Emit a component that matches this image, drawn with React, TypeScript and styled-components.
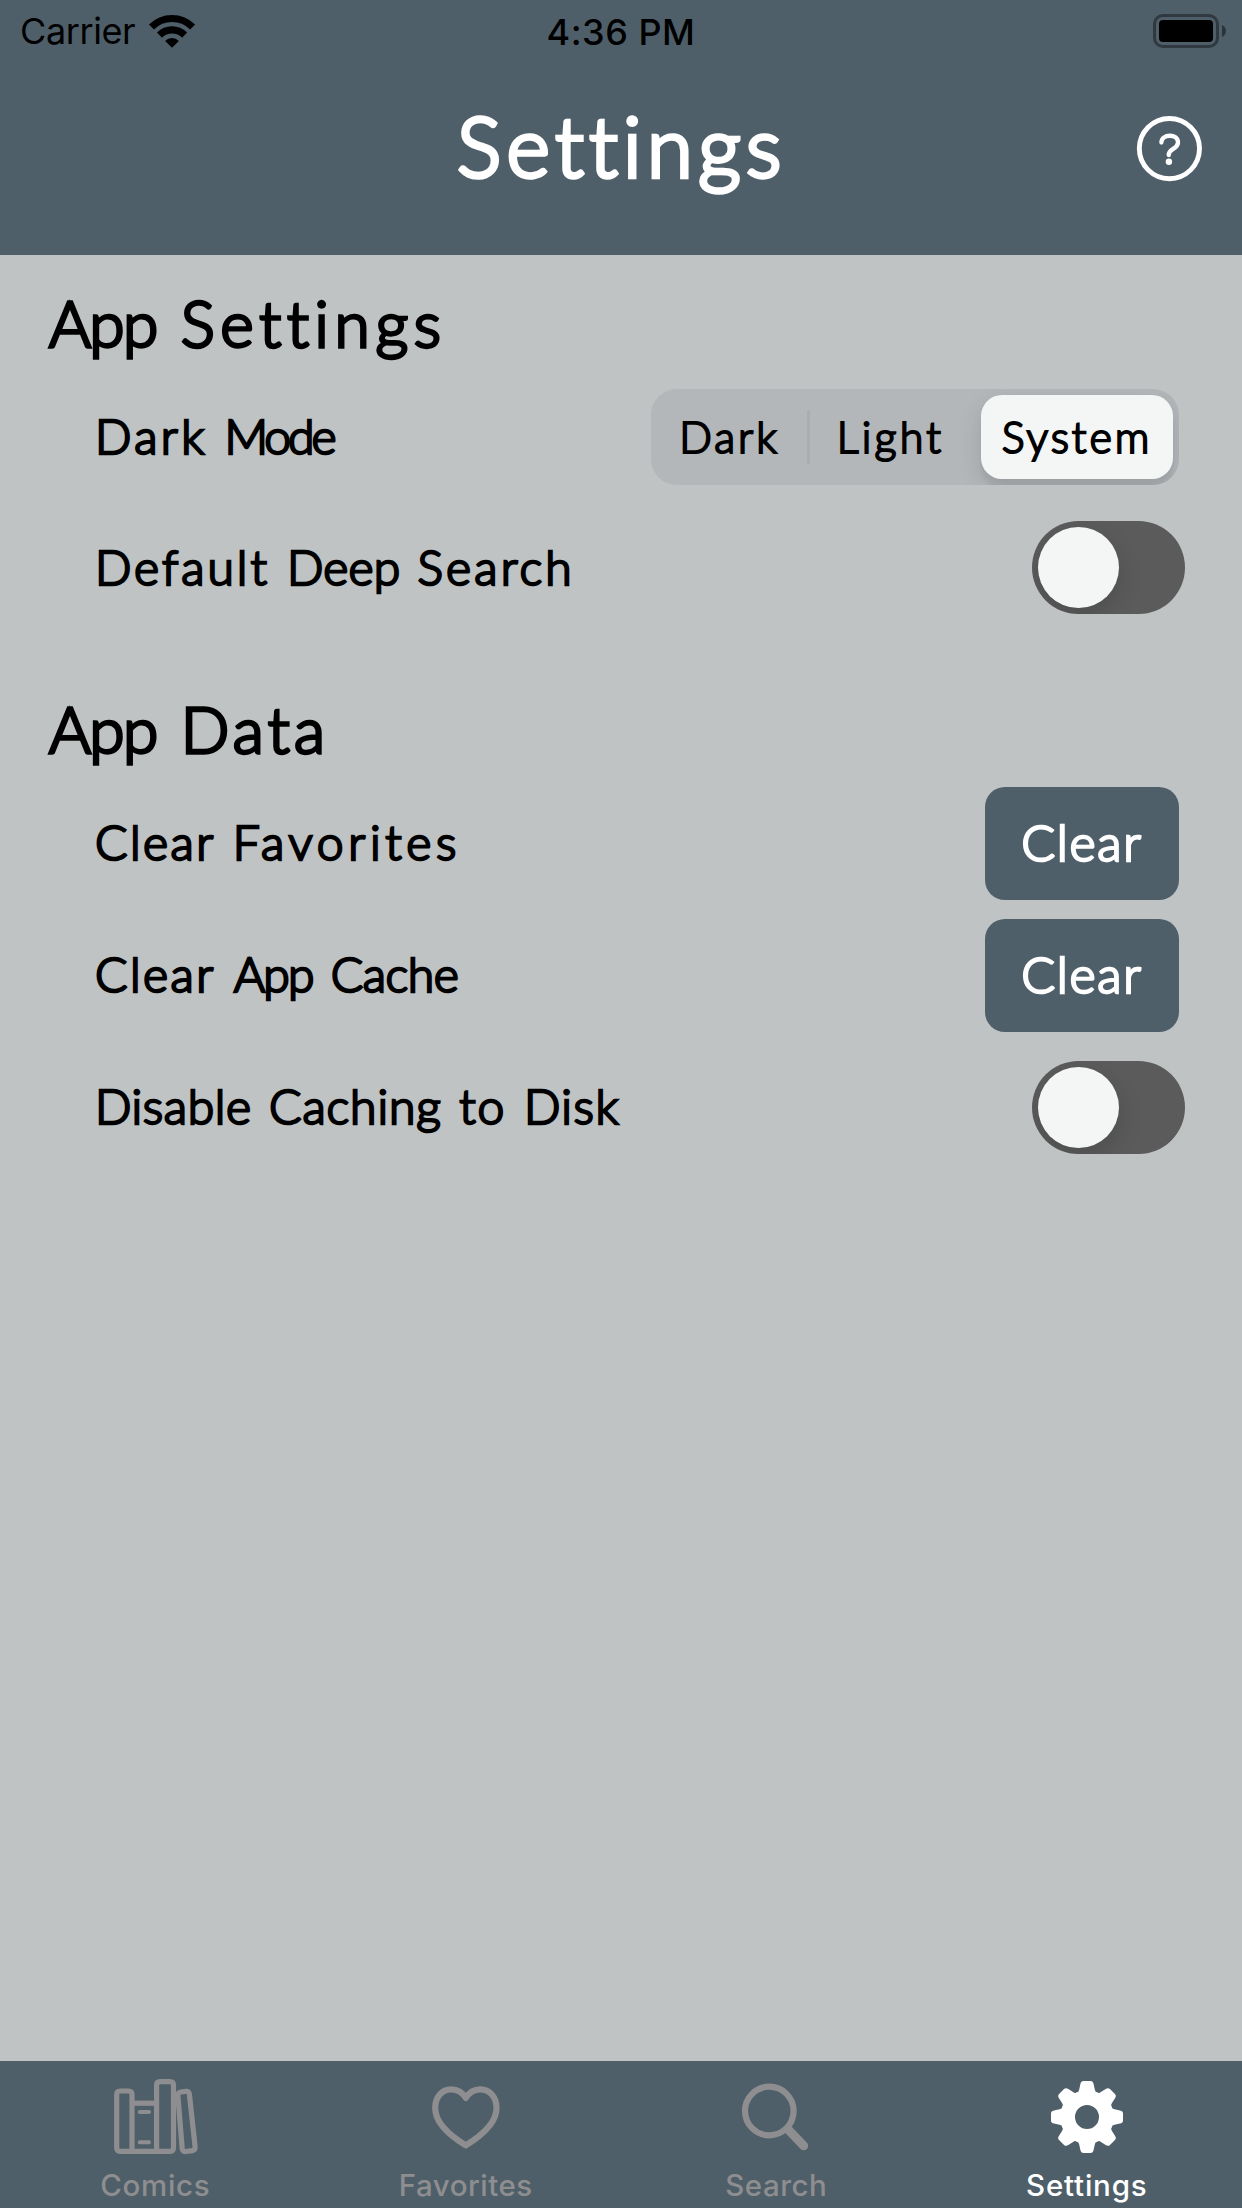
import React, { useState } from "react";
import styled, { createGlobalStyle } from "styled-components";

const slate = "#4f5f69";
const paper = "#bfc3c4";
const muted = "#8e8e90";

const GlobalStyle = createGlobalStyle`
  * { box-sizing: border-box; }
  body { margin: 0; background: ${paper}; }
  button { border: 0; padding: 0; background: none; color: inherit; font: inherit; }
`;

const Screen = styled.div`
  display: flex;
  flex-direction: column;
  width: 1242px;
  height: 2208px;
  background: ${paper};
  color: #000;
  font-family: Inter, "Liberation Sans", sans-serif;
`;

const Header = styled.header`
  height: 255px;
  background: ${slate};
`;

const StatusBar = styled.div`
  display: grid;
  grid-template-columns: 1fr auto 1fr;
  align-items: center;
  height: 60px;
  padding: 0 15px 0 20px;
`;

const Carrier = styled.div`
  display: flex;
  align-items: center;
  gap: 13px;
  font-size: 36px;
  line-height: 62px;
  letter-spacing: -0.4px;
`;

const Clock = styled.div`
  font-size: 36px;
  font-weight: 500;
  line-height: 60px;
  letter-spacing: 0.5px;
  padding: 2px 5px 0 0;
`;

const BatteryIcon = styled.svg`
  justify-self: end;
`;

const TitleBar = styled.div`
  display: grid;
  grid-template-columns: 1fr auto 1fr;
  align-items: center;
  height: 177px;
  padding: 0 40px;
`;

interface InkProps {
  $size: number;
  $track?: number;
  $stroke?: number;
}

const Ink = styled.span<InkProps>`
  display: block;
  font-family: Lato, "Open Sans", sans-serif;
  font-weight: 300;
  font-size: ${(p) => p.$size}px;
  line-height: 1.2;
  letter-spacing: ${(p) => p.$track ?? 0}px;
  white-space: nowrap;
  font-variant-ligatures: none;
  -webkit-text-stroke: ${(p) => p.$stroke ?? 2.5}px currentColor;
  stroke-linejoin: round;
`;

const Word = styled.span<{ $track: number }>`
  letter-spacing: ${(p) => p.$track}px;
`;

const Title = styled(Ink).attrs({ as: "h1" })`
  grid-column: 2;
  margin: 0;
  padding: 0 0 5px 2px;
  color: #fff;
`;

const HelpButton = styled.button`
  justify-self: end;
  display: flex;
`;

const Content = styled.main`
  flex: 1;
  padding: 0 57px 0 49px;
`;

const Section = styled.section<{ $top: number }>`
  padding-top: ${(p) => p.$top}px;
`;

const Heading = styled(Ink).attrs({ as: "h2" })`
  margin: 0;
  height: 86px;
`;

const Row = styled.div<{ $height?: number }>`
  display: flex;
  align-items: center;
  justify-content: space-between;
  height: ${(p) => p.$height ?? 132}px;
  padding-left: 46px;
`;

const Label = styled(Ink)`
  padding-bottom: 2px;
`;

const Segmented = styled.div`
  display: flex;
  align-items: center;
  width: 528px;
  height: 96px;
  margin-right: 6px;
  padding: 6px;
  border-radius: 26px;
  background: #b3b7ba;
  overflow: hidden;
`;

const Segment = styled.button<{ $width: number; $inset: number; $on: boolean }>`
  display: flex;
  align-items: center;
  justify-content: center;
  width: ${(p) => p.$width}px;
  height: 84px;
  padding-right: ${(p) => p.$inset}px;
  border-radius: 21px;
  background: ${(p) => (p.$on ? "#f4f6f6" : "transparent")};
  box-shadow: ${(p) => (p.$on ? "0 9px 24px rgba(0,0,0,.12), 0 9px 3px rgba(0,0,0,.04)" : "none")};
`;

const Divider = styled.span<{ $shown: boolean }>`
  width: 3px;
  height: 54px;
  border-radius: 2px;
  background: ${(p) => (p.$shown ? "#a9adb0" : "transparent")};
`;

const Track = styled.button<{ $on: boolean }>`
  display: flex;
  justify-content: ${(p) => (p.$on ? "flex-end" : "flex-start")};
  width: 153px;
  height: 93px;
  padding: 6px;
  border-radius: 47px;
  background: ${(p) => (p.$on ? slate : "#5b5b5b")};
  overflow: hidden;
`;

const Knob = styled.span`
  width: 81px;
  height: 81px;
  border-radius: 50%;
  background: #f4f6f6;
  box-shadow: 0 9px 24px rgba(0, 0, 0, 0.15);
`;

const ClearButton = styled.button`
  display: flex;
  align-items: center;
  justify-content: center;
  width: 194px;
  height: 113px;
  margin-right: 6px;
  border-radius: 20px;
  background: ${slate};
  color: #fff;
`;

const TabBar = styled.nav`
  display: grid;
  grid-template-columns: repeat(4, 1fr);
  height: 147px;
  background: ${slate};
`;

const Tab = styled.button<{ $active?: boolean }>`
  display: flex;
  flex-direction: column;
  align-items: center;
  padding-top: 14px;
  color: ${(p) => (p.$active ? "#fff" : muted)};
`;

const TabLabel = styled.span<{ $track: number }>`
  margin-top: 8px;
  font-size: 29.5px;
  font-weight: 500;
  line-height: 36px;
  letter-spacing: ${(p) => p.$track}px;
`;

const Wifi = () => (
  <svg width="48" height="35" viewBox="148 12 48 35" fill="none" stroke="#000">
    <path d="M151.5 25 A29.1 29.1 0 0 1 192.6 25" strokeWidth="7.2" />
    <path d="M159.5 33.1 A17.8 17.8 0 0 1 184.6 33.1" strokeWidth="7.2" />
    <path d="M172 45.7 L165.1 38.9 A9.8 9.8 0 0 1 178.9 38.9 Z" fill="#000" stroke="none" />
  </svg>
);

const Battery = () => (
  <BatteryIcon width="74" height="34" viewBox="0 0 74 34">
    <rect x="1.5" y="1.5" width="63" height="31" rx="8.5" fill="none" stroke="#000" strokeOpacity=".4" strokeWidth="3" />
    <rect x="6" y="6" width="54" height="22" rx="4" />
    <path d="M69 11 C74.3 13 74.3 21 69 23 Z" opacity=".45" />
  </BatteryIcon>
);

const Help = () => (
  <svg width="66" height="66" viewBox="0 0 66 66" fill="none" stroke="#fff" strokeLinecap="round">
    <circle cx="33.4" cy="32.6" r="30.1" strokeWidth="4.9" />
    <path d="M25.4 26.5 C25.4 18 42.2 17 42 26.6 C41.8 33.4 32.5 32.4 32.7 39" strokeWidth="4.3" />
    <circle cx="32.9" cy="45.7" r="3.2" fill="#fff" stroke="none" />
  </svg>
);

const Books = () => (
  <svg width="90" height="84" viewBox="0 0 90 84" fill="none" stroke="currentColor" strokeWidth="5.2" strokeLinejoin="round">
    <path d="M22 76.3 V19.5 Q22 16 18.5 16 H10.2 Q6.7 16 6.7 19.5 V72.8 Q6.7 76.3 10.2 76.3 H60 Q63.5 76.3 63.5 72.8 V10.2 Q63.5 6.7 60 6.7 H50.1 Q46.6 6.7 46.6 10.2 V76.3" />
    <path d="M22 28.2 H46.6" />
    <path d="M29.8 37 H39 M29.8 67.3 H39" strokeWidth="4" strokeLinecap="round" />
    <path d="M70.8 17 L76 16.3 Q79.1 16 79.4 19.3 L85.1 71.8 Q85.4 75 82.3 75.6 L76 76.5 Q72.6 76.8 72.2 73.5 L67.9 21 Q67.6 17.5 70.8 17 Z" />
  </svg>
);

const Heart = () => (
  <svg width="76" height="84" viewBox="0 -5 76 84" fill="none" stroke="currentColor" strokeWidth="6.2" strokeLinejoin="round">
    <path d="M37.8 65.4 C20 54.5 7.2 42 7.2 28.3 C7.2 17 14 9.3 23.3 9.3 C29.5 9.3 34.5 12.5 37.8 18 C41.1 12.5 46 9.3 52.2 9.3 C61.6 9.3 68.5 17 68.5 28.3 C68.5 42 55.5 54.5 37.8 65.4 Z" />
  </svg>
);

const Magnifier = () => (
  <svg width="76" height="84" viewBox="0 -5 76 84" fill="none" stroke="currentColor">
    <circle cx="31.3" cy="31" r="24.3" strokeWidth="6.2" />
    <path d="M50 49.4 L65.8 65.9" strokeWidth="8.8" strokeLinecap="round" />
  </svg>
);

const Gear = () => (
  <svg width="76" height="84" viewBox="-38 -42 76 84" fill="currentColor">
    <circle r="18.8" fill="none" stroke="currentColor" strokeWidth="13.6" />
    {[0, 45, 90, 135, 180, 225, 270, 315].map((angle) => (
      <path
        key={angle}
        transform={`rotate(${angle})`}
        d="M-11 -23 L-10.5 -24.5 Q-8 -25 -7.8 -27.5 L-6.6 -33 Q-6 -36 -3.5 -36 H3.5 Q6 -36 6.6 -33 L7.8 -27.5 Q8 -25 10.5 -24.5 L11 -23 Z"
      />
    ))}
  </svg>
);

type Phrase = [text: string, track: number][];

const Words = ({ of }: { of: Phrase }) => (
  <>
    {of.map(([text, track], i) => (
      <React.Fragment key={i}>
        {i > 0 && " "}
        <Word $track={track}>{text}</Word>
      </React.Fragment>
    ))}
  </>
);

const modes = [
  { name: "Dark", width: 150, inset: 5, track: 3, divider: true },
  { name: "Light", width: 168, inset: 7, track: 3.2, divider: false },
  { name: "System", width: 192, inset: 0, track: 2.9, divider: false },
];

const tabs = [
  { name: "Comics", track: 0.7, icon: <Books /> },
  { name: "Favorites", track: 0.5, icon: <Heart /> },
  { name: "Search", track: 0.5, icon: <Magnifier /> },
  { name: "Settings", track: 0.8, icon: <Gear /> },
];

const Toggle = () => {
  const [on, setOn] = useState(false);
  return (
    <Track $on={on} role="switch" aria-checked={on} onClick={() => setOn(!on)}>
      <Knob />
    </Track>
  );
};

export default function App() {
  const [mode, setMode] = useState("System");

  return (
    <Screen>
      <GlobalStyle />
      <Header>
        <StatusBar>
          <Carrier>
            Carrier
            <Wifi />
          </Carrier>
          <Clock>4:36 PM</Clock>
          <Battery />
        </StatusBar>
        <TitleBar>
          <Title $size={83} $track={5.5} $stroke={4.4}>Settings</Title>
          <HelpButton aria-label="Help">
            <Help />
          </HelpButton>
        </TitleBar>
      </Header>
      <Content>
        <Section $top={30}>
          <Heading $size={64} $track={6.5} $stroke={3.3}>
            <Words of={[["App", -1.5], ["Settings", 5.7]]} />
          </Heading>
          <Row>
            <Label $size={48} $track={4}>
              <Words of={[["Dark", 3.4], ["Mode", -3]]} />
            </Label>
            <Segmented>
              {modes.map((m) => (
                <React.Fragment key={m.name}>
                  <Segment $width={m.width} $inset={m.inset} $on={mode === m.name} onClick={() => setMode(m.name)}>
                    <Ink $size={43} $track={m.track} $stroke={2.1}>{m.name}</Ink>
                  </Segment>
                  {m.name !== "System" && <Divider $shown={m.divider} />}
                </React.Fragment>
              ))}
            </Segmented>
          </Row>
          <Row $height={129}>
            <Label $size={48} $track={4}>
              <Words of={[["Default", 3], ["Deep", 0.2], ["Search", 3.2]]} />
            </Label>
            <Toggle />
          </Row>
        </Section>
        <Section $top={59}>
          <Heading $size={64} $track={6.5} $stroke={3.3}>
            <Words of={[["App", -1.5], ["Data", 4.3]]} />
          </Heading>
          <Row>
            <Label $size={48} $track={4}>
              <Words of={[["Clear", 2.5], ["Favorites", 4.7]]} />
            </Label>
            <ClearButton>
              <Label $size={50} $track={1.7}>Clear</Label>
            </ClearButton>
          </Row>
          <Row>
            <Label $size={48} $track={5}>
              <Words of={[["Clear", 2.5], ["App", -1.8], ["Cache", -0.4]]} />
            </Label>
            <ClearButton>
              <Label $size={50} $track={1.7}>Clear</Label>
            </ClearButton>
          </Row>
          <Row>
            <Label $size={48} $track={4.5}>
              <Words of={[["Disable", 0.6], ["Caching", 0.9], ["to", 2], ["Disk", 1.5]]} />
            </Label>
            <Toggle />
          </Row>
        </Section>
      </Content>
      <TabBar>
        {tabs.map((t) => (
          <Tab key={t.name} $active={t.name === "Settings"}>
            {t.icon}
            <TabLabel $track={t.track}>{t.name}</TabLabel>
          </Tab>
        ))}
      </TabBar>
    </Screen>
  );
}
